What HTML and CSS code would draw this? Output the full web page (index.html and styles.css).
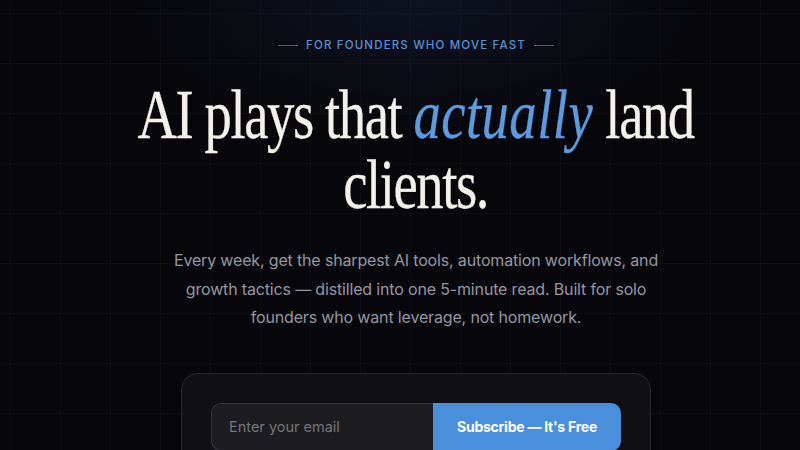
FILE: index.html
```html
<!DOCTYPE html>
<html lang="en">
<head>
<meta charset="utf-8">
<title>AI plays that actually land clients.</title>
<link rel="stylesheet" href="styles.css">
</head>
<body>
<main class="hero">
  <div class="eyebrow"><span class="rule"></span><span class="eyebrow-text">FOR FOUNDERS WHO MOVE FAST</span><span class="rule"></span></div>
  <h1 class="headline">AI plays that <em class="accent">actually</em> land<br>clients.</h1>
  <p class="lede">Every week, get the sharpest AI tools, automation workflows, and<br>growth tactics — distilled into one 5-minute read. Built for solo<br>founders who want leverage, not homework.</p>
  <form class="card">
    <div class="signup">
      <input class="email" type="email" placeholder="Enter your email">
      <button class="btn" type="button">Subscribe — It's Free</button>
    </div>
  </form>
</main>
</body>
</html>
```
FILE: styles.css
```css
html, body {
  margin: 0;
  padding: 0;
  height: 100%;
}
body {
  background-color: #07070b;
  background-image:
    radial-gradient(ellipse 420px 200px at 52% 0%, rgba(40, 60, 110, 0.22), rgba(0,0,0,0) 70%),
    linear-gradient(to right, rgba(255,255,255,0.028) 1px, transparent 1px),
    linear-gradient(to bottom, rgba(255,255,255,0.028) 1px, transparent 1px);
  background-size: 100% 100%, 50px 50px, 50px 50px;
  background-position: 0 0, 10px 0, 0 13px;
  font-family: "Inter", "Liberation Sans", sans-serif;
  overflow: hidden;
}
.hero {
  display: flex;
  flex-direction: column;
  align-items: center;
  padding-top: 38px;
  padding-left: 32px;
}
.eyebrow {
  display: flex;
  align-items: center;
  gap: 8px;
  height: 14px;
}
.rule {
  width: 20px;
  height: 1px;
  background: #3f5f8c;
}
.eyebrow-text {
  font-size: 11.5px;
  letter-spacing: 1.15px;
  color: #5a8fd2;
  font-weight: 500;
}
.headline {
  margin: 28px 0 0;
  font-family: "Liberation Serif", serif;
  font-weight: 400;
  font-size: 70px;
  line-height: 70px;
  color: #f4f1ea;
  text-align: center;
  letter-spacing: -1.8px;
  transform: scaleX(0.78);
  white-space: nowrap;
  -webkit-text-stroke: 0.3px #f4f1ea;
}
.accent {
  color: #5b9be2;
  font-style: italic;
  letter-spacing: 0.6px;
  -webkit-text-stroke: 0.3px #5b9be2;
}
.lede {
  margin: 26px 0 0;
  font-size: 16px;
  line-height: 28.5px;
  letter-spacing: -0.16px;
  color: #9696a3;
  text-align: center;
}
.card {
  margin: 41px 0 0;
  width: 410px;
  padding: 29px;
  background: #111115;
  border: 1px solid #26262c;
  border-radius: 16px;
}
.signup {
  display: flex;
  height: 48px;
}
.email {
  flex: 1;
  min-width: 0;
  box-sizing: border-box;
  height: 48px;
  margin: 0;
  padding: 0 17px;
  background: #1c1c21;
  border: 1px solid #35353b;
  border-right: none;
  border-radius: 10px 0 0 10px;
  font-family: "Inter", "Liberation Sans", sans-serif;
  font-size: 14.5px;
  color: #d0d0d6;
  outline: none;
}
.email::placeholder {
  color: #75757e;
}
.btn {
  width: 188px;
  height: 48px;
  margin: 0;
  padding: 0;
  border: none;
  border-radius: 0 10px 10px 0;
  background: #4a8fdb;
  color: #ffffff;
  font-family: "Inter", "Liberation Sans", sans-serif;
  font-size: 14px;
  letter-spacing: -0.25px;
  font-weight: 700;
  cursor: pointer;
}
```
